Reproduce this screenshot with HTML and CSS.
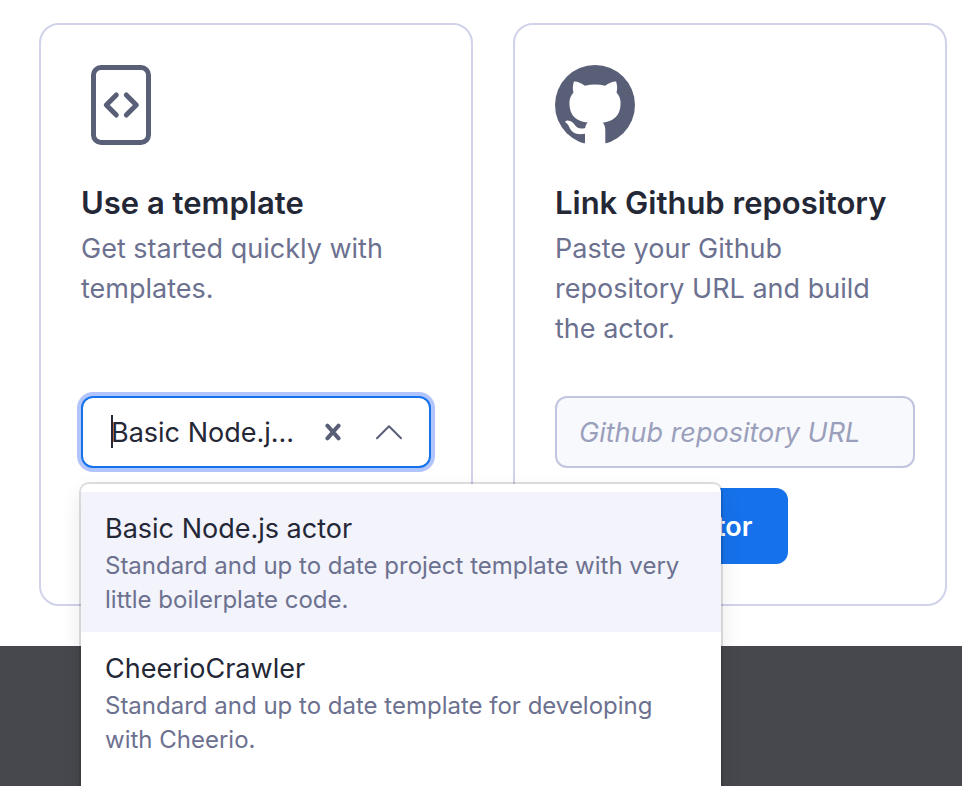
FILE: index.html
```html
<!DOCTYPE html>
<html lang="en">
<head>
<meta charset="utf-8">
<meta name="viewport" content="width=device-width, initial-scale=1">
<title>Create actor</title>
<link rel="stylesheet" href="styles.css">
</head>
<body>
<div class="page">
  <main class="dialog">
    <section class="card">
      <svg class="card-icon" viewBox="0 0 80 80" fill="none" stroke="currentColor" stroke-width="5" stroke-linecap="round" stroke-linejoin="round" aria-hidden="true">
        <rect x="12.5" y="2.5" width="55" height="75" rx="7.5"/>
        <path d="M35.3 30 25.3 40l10 10M45.3 30l10 10-10 10"/>
      </svg>
      <h2 class="card-title">Use a template</h2>
      <p class="card-text">Get started quickly with templates.</p>
      <div class="combo">
        <div class="combo-control">
          <span class="caret"></span>
          <input class="combo-input" type="text" role="combobox" aria-label="Template" aria-expanded="true" aria-controls="templates" value="Basic Node.j...">
          <button class="combo-button" type="button" aria-label="Clear">
            <svg width="16" height="18" viewBox="0 0 16 18" fill="none" stroke="currentColor" stroke-width="4" stroke-linecap="round" aria-hidden="true"><path d="M2.4 2.7l11.2 12.6M13.6 2.7L2.4 15.3"/></svg>
          </button>
          <button class="combo-button" type="button" aria-label="Close menu">
            <svg width="28" height="16" viewBox="0 0 28 16" fill="none" stroke="currentColor" stroke-width="2" stroke-linecap="round" stroke-linejoin="round" aria-hidden="true"><path d="M2 14.2 14 2.2l12 12"/></svg>
          </button>
        </div>
        <ul class="menu" id="templates" role="listbox" aria-label="Templates">
          <li class="option option-active" role="option" aria-selected="true">
            <div class="option-title">Basic Node.js actor</div>
            <div class="option-text">Standard and up to date project template with very little boilerplate code.</div>
          </li>
          <li class="option" role="option" aria-selected="false">
            <div class="option-title">CheerioCrawler</div>
            <div class="option-text">Standard and up to date template for developing with Cheerio.</div>
          </li>
        </ul>
      </div>
    </section>
    <section class="card">
      <svg class="card-icon" viewBox="0 0 80 80" aria-hidden="true">
        <circle cx="40" cy="40" r="40" fill="currentColor"/>
        <path fill="#fff" d="M27.400 80C29 79.500 30 78.500 30 77V68.800C21.500 70.200 17 68 14.600 62.800C13.700 60.600 12.600 59 10.600 57.600C9.800 56.300 11 55.500 12.600 55.600C16.200 56 18.400 57.800 20.200 60.600C22.400 63.600 25.800 64.200 30.200 63C30.500 60.800 31.400 58.900 32.800 57.600C22.500 56.500 14.400 51.500 14.400 38.200c0-4.300 1.500-7.900 4.100-10.700-.9-2.600-1-6.600.4-10.900 3.500-.2 7.300 1.700 11 4.100 6.600-1.700 13.600-1.700 20.200 0 3.700-2.400 7.500-4.300 11-4.100 1.400 4.300 1.300 8.300.4 10.900 2.600 2.800 4.100 6.400 4.100 10.700 0 13.300-8.100 18.300-17.900 19.500 1.700 1.500 2.600 4 2.600 7.300V77C50.300 78.500 51.300 79.500 52.900 80Z"/>
      </svg>
      <h2 class="card-title">Link Github repository</h2>
      <p class="card-text">Paste your Github repository URL and build the actor.</p>
      <input class="url-input" type="url" placeholder="Github repository URL" aria-label="Github repository URL">
      <button class="submit" type="button">Create actor</button>
    </section>
  </main>
</div>
</body>
</html>
```
FILE: styles.css
```css
* {
  box-sizing: border-box;
}

body {
  margin: 0;
  background: #47484d;
  color: #242736;
  font-family: Inter, "Liberation Sans", sans-serif;
  font-size: 27px;
}

input,
button {
  font: inherit;
}

.page {
  min-height: 100vh;
  max-height: 100vh;
  overflow: hidden;
}

.dialog {
  display: grid;
  grid-template-columns: 1fr 1fr;
  gap: 40px;
  padding: 23px 15px 40px 39px;
  background: #fff;
}

.card {
  display: flex;
  flex-direction: column;
  align-items: flex-start;
  min-width: 0;
  padding: 40px;
  border: 2px solid #d0d3ea;
  border-radius: 20px;
}

.card-icon {
  width: 80px;
  height: 80px;
  margin-bottom: 38px;
  color: #5a5f78;
}

.card-title {
  margin: 0 0 6px;
  font-size: 31px;
  font-weight: 600;
  line-height: 40px;
  white-space: nowrap;
}

.card-text {
  min-height: 120px;
  margin: 0 0 47px;
  color: #6c7190;
  line-height: 40px;
}

.combo {
  position: relative;
  width: 100%;
}

.combo-control {
  position: relative;
  display: flex;
  align-items: center;
  gap: 28px;
  height: 72px;
  padding: 0 26px 0 28px;
  border: 2px solid #1672eb;
  border-radius: 12px;
  background: #fff;
  box-shadow: 0 0 0 4px #b1c5fc;
}

.combo-input {
  flex: 1;
  min-width: 0;
  padding: 0;
  border: 0;
  outline: 0;
  background: none;
  color: inherit;
}

.caret {
  position: absolute;
  left: 28px;
  top: 17px;
  width: 2px;
  height: 33px;
  background: #242736;
}

.combo-button {
  display: flex;
  padding: 0;
  border: 0;
  background: none;
  color: #5a5f78;
}

.combo-button + .combo-button {
  margin-left: 6px;
}

.menu {
  position: absolute;
  z-index: 1;
  top: calc(100% + 16px);
  left: 0;
  width: 640px;
  margin: 0;
  padding: 8px 0 24px;
  border-radius: 8px;
  background: #fff;
  box-shadow: 0 0 0 2px rgba(0, 0, 0, 0.12), 0 8px 22px rgba(0, 0, 0, 0.1);
  list-style: none;
}

.option {
  padding: 17px 24px 15px;
}

.option-active {
  background: #f2f3fb;
}

.option-title {
  line-height: 40px;
}

.option-text {
  color: #6c7190;
  font-size: 24px;
  line-height: 34px;
}

.url-input {
  width: 360px;
  height: 72px;
  margin-bottom: 20px;
  padding: 0 22px;
  border: 2px solid #c0c6e0;
  border-radius: 12px;
  background: #f8f9fc;
}

.url-input::placeholder {
  color: #9a9fbc;
  font-style: italic;
  opacity: 1;
}

.submit {
  height: 76px;
  padding: 0 36px;
  border: 0;
  border-radius: 12px;
  background: #1672eb;
  color: #fff;
  font-weight: 600;
}
```
